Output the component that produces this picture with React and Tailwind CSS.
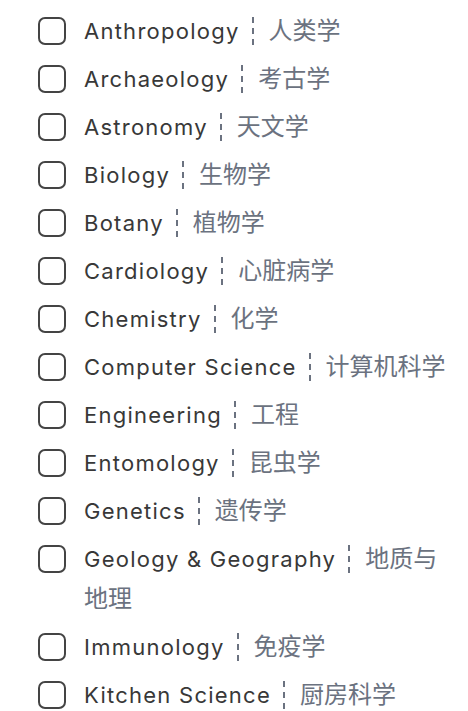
import React from "react";

const subjects = [
  ["Anthropology", "人类学"],
  ["Archaeology", "考古学"],
  ["Astronomy", "天文学"],
  ["Biology", "生物学"],
  ["Botany", "植物学"],
  ["Cardiology", "心脏病学"],
  ["Chemistry", "化学"],
  ["Computer Science", "计算机科学"],
  ["Engineering", "工程"],
  ["Entomology", "昆虫学"],
  ["Genetics", "遗传学"],
  ["Geology & Geography", "地质与地理"],
  ["Immunology", "免疫学"],
  ["Kitchen Science", "厨房科学"],
];

const App = () => {
  return (
    <div
      className="w-[468px] h-[711px] overflow-hidden bg-white pl-[38px] pr-[20px] pt-[11px]"
      style={{ fontFamily: '"Inter", "Noto Sans CJK SC", sans-serif' }}
    >
      <ul className="flex flex-col gap-2">
        {subjects.map(([en, zh]) => (
          <li key={en} className="flex items-start gap-[18px]">
            <span className="mt-[6px] w-[28px] h-[28px] shrink-0 rounded-[7px] border-[2.5px] border-[#444]" />
            <p className="text-[22px] leading-[40px] tracking-[1.25px] text-[#383838]">
              {en}
              <span className="inline-block align-middle ml-[12px] mr-[15px] h-[28px] border-l-2 border-dashed border-[#6b7280] -mt-1" />
              <span className="text-[#6b7280] text-[24px] tracking-normal">{zh}</span>
            </p>
          </li>
        ))}
      </ul>
    </div>
  );
};

export default App;
